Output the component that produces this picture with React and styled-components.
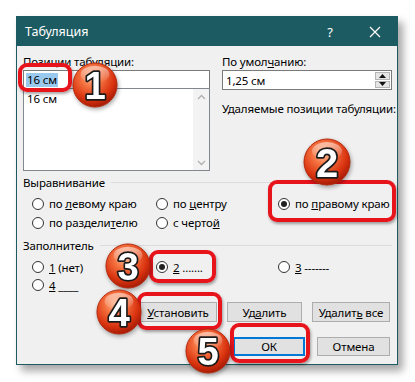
import React from "react";
import styled, { createGlobalStyle } from "styled-components";

const GlobalStyle = createGlobalStyle`
  html, body { margin: 0; padding: 0; background: #ffffff; }
  body {
    font-family: "Noto Sans", "Liberation Sans", sans-serif;
    font-size: 11.5px;
    letter-spacing: -0.15px;
    color: #000;
  }
`;

const Page = styled.div`
  position: relative;
  width: 415px;
  height: 382px;
  padding: 16px 0 0 16px;
  box-sizing: border-box;
  overflow: hidden;
`;

const Window = styled.div`
  width: 382px;
  height: 349px;
  box-sizing: border-box;
  border: 1px solid #1d5b62;
  background: #f0f0f0;
  box-shadow: 5px 6px 8px rgba(0, 0, 0, 0.35);
  display: flex;
  flex-direction: column;
`;

const TitleBar = styled.div`
  height: 29px;
  flex: none;
  background: #1d5b62;
  color: #fff;
  display: flex;
  align-items: center;
  padding-left: 8px;
  font-size: 12.5px;
  letter-spacing: 0;
`;

const TitleText = styled.span`
  flex: 1;
`;

const Help = styled.span`
  width: 20px;
  text-align: center;
  font-size: 13px;
  margin-right: 25px;
`;

const Close = styled.span`
  width: 20px;
  display: flex;
  justify-content: center;
  margin-right: 12px;
`;

const Body = styled.div`
  padding: 8px 5px 0 6px;
  display: flex;
  flex-direction: column;
`;

const TopRow = styled.div`
  display: grid;
  grid-template-columns: 187px 170px;
  column-gap: 12px;
`;

const Column = styled.div`
  display: flex;
  flex-direction: column;
`;

const Label = styled.div`
  height: 16px;
  line-height: 16px;
  white-space: nowrap;
  margin-top: ${(p) => p.$top || 0}px;
`;

const TextInput = styled.div`
  height: 19px;
  box-sizing: border-box;
  border: 1px solid #7a7a7a;
  background: #fff;
  display: flex;
  align-items: center;
  padding-left: 2px;
`;

const Selected = styled.span`
  background: #99c9ef;
  padding: 0 1px;
  line-height: 14px;
`;

const ListBox = styled.div`
  height: 83px;
  margin-top: -1px;
  box-sizing: border-box;
  border: 1px solid #828790;
  background: #fff;
  display: flex;
`;

const ListItems = styled.div`
  flex: 1;
  padding: 2px 0 0 3px;
  line-height: 16px;
`;

const ScrollBar = styled.div`
  width: 16px;
  background: #f3f3f3;
  display: flex;
  flex-direction: column;
  justify-content: space-between;
  align-items: center;
  padding: 5px 0 4px;
`;

const SpinInput = styled.div`
  height: 20px;
  box-sizing: border-box;
  border: 1px solid #7a7a7a;
  background: #fff;
  display: flex;
  align-items: stretch;
`;

const SpinText = styled.div`
  flex: 1;
  padding-left: 3px;
  display: flex;
  align-items: center;
`;

const SpinButtons = styled.div`
  width: 15px;
  display: flex;
  flex-direction: column;
  margin: 1px;
  gap: 1px;
`;

const SpinButton = styled.div`
  flex: 1;
  background: #e5e5e5;
  border: 1px solid #b5b5b5;
  display: flex;
  align-items: center;
  justify-content: center;
`;

const GroupHeader = styled.div`
  display: flex;
  align-items: center;
  height: 16px;
  margin-top: ${(p) => p.$top}px;
  &::after {
    content: "";
    flex: 1;
    height: 1px;
    background: #dcdcdc;
    margin: 1px 0 0 6px;
  }
`;

const RadioGrid = styled.div`
  display: grid;
  grid-template-columns: 124px 122px auto;
  grid-auto-rows: ${(p) => p.$row}px;
  padding-left: 9px;
  margin-top: ${(p) => p.$top}px;
`;

const Radio = styled.div`
  display: flex;
  align-items: center;
  gap: 5px;
  white-space: nowrap;
`;

const Circle = styled.span`
  width: 12px;
  height: 12px;
  flex: none;
  box-sizing: border-box;
  border-radius: 50%;
  border: 1px solid #333;
  background: #fff;
  display: flex;
  align-items: center;
  justify-content: center;
  &::after {
    content: "";
    width: 6px;
    height: 6px;
    border-radius: 50%;
    background: ${(p) => (p.$checked ? "#222" : "transparent")};
  }
`;

const ButtonRow = styled.div`
  display: flex;
  justify-content: flex-end;
  gap: ${(p) => p.$gap}px;
  padding-right: 2px;
  margin-top: ${(p) => p.$top}px;
`;

const Button = styled.div`
  width: ${(p) => p.$w}px;
  height: ${(p) => p.$h || 20}px;
  box-sizing: border-box;
  background: #e1e1e1;
  border: ${(p) => (p.$default ? "2px solid #0078d7" : "1px solid #adadad")};
  display: flex;
  align-items: center;
  justify-content: center;
`;

const Frame = styled.div`
  position: absolute;
  box-sizing: border-box;
  border: 4.5px solid #e8141c;
  border-radius: 9px;
  box-shadow: 1px 2px 3px rgba(0, 0, 0, 0.35);
`;

const BadgeWrap = styled.svg`
  position: absolute;
  overflow: visible;
  filter: drop-shadow(1px 2px 2px rgba(0, 0, 0, 0.35));
`;

const Chevron = ({ up }) => (
  <svg width="9" height="6" viewBox="0 0 9 6">
    <path
      d={up ? "M1 5 L4.5 1.5 L8 5" : "M1 1 L4.5 4.5 L8 1"}
      fill="none"
      stroke="#b0b0b0"
      strokeWidth="1.3"
    />
  </svg>
);

const Tri = ({ up }) => (
  <svg width="7" height="4" viewBox="0 0 7 4">
    <path d={up ? "M0 4 L3.5 0 L7 4 Z" : "M0 0 L3.5 4 L7 0 Z"} fill="#111" />
  </svg>
);

const Badge = ({ n, x, y, d = 46 }) => (
  <BadgeWrap
    width={d}
    height={d}
    viewBox="0 0 48 48"
    style={{ left: x - d / 2, top: y - d / 2 }}
  >
    <defs>
      <radialGradient id={`g${n}`} cx="42%" cy="32%" r="68%">
        <stop offset="0%" stopColor="#ffb48c" />
        <stop offset="35%" stopColor="#f4713f" />
        <stop offset="75%" stopColor="#d9330f" />
        <stop offset="100%" stopColor="#a81c06" />
      </radialGradient>
      <linearGradient id={`h${n}`} x1="0" y1="0" x2="0" y2="1">
        <stop offset="0%" stopColor="#fff" stopOpacity="0.55" />
        <stop offset="100%" stopColor="#fff" stopOpacity="0" />
      </linearGradient>
    </defs>
    <circle cx="24" cy="24" r="23" fill={`url(#g${n})`} stroke="#b4270a" strokeWidth="1" />
    <ellipse cx="24" cy="13" rx="15" ry="9" fill={`url(#h${n})`} />
    <text
      x="24"
      y="38.5"
      textAnchor="middle"
      fontFamily="'Liberation Sans', Arial, sans-serif"
      fontWeight="bold"
      fontSize="40"
      fill="#fff"
      stroke="#1a1a1a"
      strokeWidth="3.5"
      paintOrder="stroke"
      strokeLinejoin="round"
    >
      {n}
    </text>
  </BadgeWrap>
);

export default function App() {
  return (
    <Page>
      <GlobalStyle />
      <Window>
        <TitleBar>
          <TitleText>Табуляция</TitleText>
          <Help>?</Help>
          <Close>
            <svg width="12" height="12" viewBox="0 0 12 12">
              <path d="M1 1 L11 11 M11 1 L1 11" stroke="#fff" strokeWidth="1.2" />
            </svg>
          </Close>
        </TitleBar>
        <Body>
          <TopRow>
            <Column>
              <Label>Позиции табуляции:</Label>
              <TextInput>
                <Selected>16 см</Selected>
              </TextInput>
              <ListBox>
                <ListItems>16 см</ListItems>
                <ScrollBar>
                  <Chevron up />
                  <Chevron />
                </ScrollBar>
              </ListBox>
            </Column>
            <Column>
              <Label>
                По умол<u>ч</u>анию:
              </Label>
              <SpinInput>
                <SpinText>1,25 см</SpinText>
                <SpinButtons>
                  <SpinButton>
                    <Tri up />
                  </SpinButton>
                  <SpinButton>
                    <Tri />
                  </SpinButton>
                </SpinButtons>
              </SpinInput>
              <Label $top={11}>Удаляемые позиции табуляции:</Label>
            </Column>
          </TopRow>

          <GroupHeader $top={3}>Выравнивание</GroupHeader>
          <RadioGrid $row={19} $top={4}>
            <Radio>
              <Circle />
              <span>
                по <u>л</u>евому краю
              </span>
            </Radio>
            <Radio>
              <Circle />
              <span>
                по <u>ц</u>ентру
              </span>
            </Radio>
            <Radio>
              <Circle $checked />
              <span>
                по <u>п</u>равому краю
              </span>
            </Radio>
            <Radio>
              <Circle />
              <span>
                по раздели<u>т</u>елю
              </span>
            </Radio>
            <Radio>
              <Circle />
              <span>
                с черто<u>й</u>
              </span>
            </Radio>
          </RadioGrid>

          <GroupHeader $top={5}>Заполнитель</GroupHeader>
          <RadioGrid $row={18} $top={5}>
            <Radio>
              <Circle />
              <span>
                <u>1</u> (нет)
              </span>
            </Radio>
            <Radio>
              <Circle $checked />
              <span>
                <u>2</u> .......
              </span>
            </Radio>
            <Radio>
              <Circle />
              <span>
                <u>3</u> -------
              </span>
            </Radio>
            <Radio>
              <Circle />
              <span>
                <u>4</u> ____
              </span>
            </Radio>
          </RadioGrid>

          <ButtonRow $gap={10} $top={8}>
            <Button $w={78}>
              <span>
                <u>У</u>становить
              </span>
            </Button>
            <Button $w={75}>
              <span>
                Уд<u>а</u>лить
              </span>
            </Button>
            <Button $w={78}>
              <span>
                Удалит<u>ь</u> все
              </span>
            </Button>
          </ButtonRow>
          <ButtonRow $gap={12} $top={15}>
            <Button $w={72} $h={19} $default>
              ОК
            </Button>
            <Button $w={73} $h={19}>
              Отмена
            </Button>
          </ButtonRow>
        </Body>
      </Window>

      <Frame style={{ left: 18, top: 63, width: 54, height: 29 }} />
      <Frame style={{ left: 268, top: 180, width: 128, height: 42 }} />
      <Frame style={{ left: 149, top: 250, width: 67, height: 33 }} />
      <Frame style={{ left: 137, top: 292, width: 85, height: 38 }} />
      <Frame style={{ left: 230, top: 323, width: 80, height: 40 }} />

      <Badge n={1} x={95} y={85} />
      <Badge n={2} x={327} y={162} d={48} />
      <Badge n={3} x={128} y={266} />
      <Badge n={4} x={119} y={312} />
      <Badge n={5} x={208} y={351} />
    </Page>
  );
}
